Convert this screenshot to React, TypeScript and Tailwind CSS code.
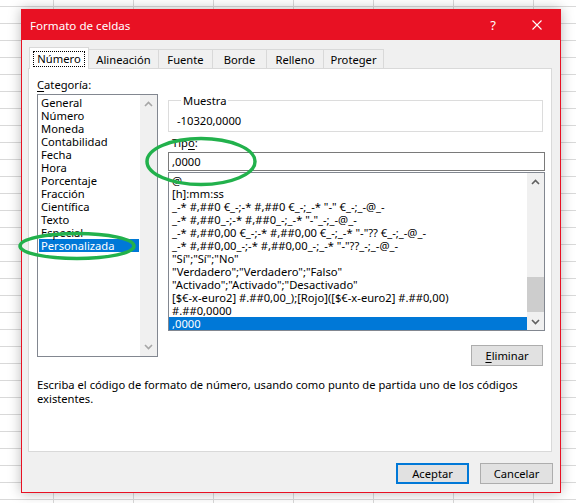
import React from 'react';

const categories = [
  'General',
  'Número',
  'Moneda',
  'Contabilidad',
  'Fecha',
  'Hora',
  'Porcentaje',
  'Fracción',
  'Científica',
  'Texto',
  'Especial',
  'Personalizada',
];

const formats = [
  '@',
  '[h]:mm:ss',
  '_-* #,##0 €_-;-* #,##0 €_-;_-* "-" €_-;_-@_-',
  '_-* #,##0_-;-* #,##0_-;_-* "-"_-;_-@_-',
  '_-* #,##0,00 €_-;-* #,##0,00 €_-;_-* "-"?? €_-;_-@_-',
  '_-* #,##0,00_-;-* #,##0,00_-;_-* "-"??_-;_-@_-',
  '"Sí";"Sí";"No"',
  '"Verdadero";"Verdadero";"Falso"',
  '"Activado";"Activado";"Desactivado"',
  '[$€-x-euro2] #.##0,00_);[Rojo]([$€-x-euro2] #.##0,00)',
  '#.##0,0000',
  ',0000',
];

const tabs = [
  { label: 'Alineación', w: 'w-[70px]' },
  { label: 'Fuente', w: 'w-[54px]' },
  { label: 'Borde', w: 'w-[54px]' },
  { label: 'Relleno', w: 'w-[57px]' },
  { label: 'Proteger', w: 'w-[60px]' },
];

function Chevron({ up, color }: { up?: boolean; color: string }) {
  return (
    <svg width="9" height="6" viewBox="0 0 9 6">
      <path
        d={up ? 'M1 5L4.5 1.5L8 5' : 'M1 1L4.5 4.5L8 1'}
        fill="none"
        stroke={color}
        strokeWidth="1.6"
      />
    </svg>
  );
}

export default function App() {
  return (
    <div className="relative h-[503px] w-[576px] overflow-hidden bg-white bg-[linear-gradient(to_right,#d9d9d9_1px,transparent_1px),linear-gradient(to_bottom,#d9d9d9_1px,transparent_1px)] bg-size-[80px_17px] bg-position-[53px_6px] pl-[21px] pt-[9px] font-['Noto_Sans',sans-serif] text-[11.2px] leading-[13px] text-black">
      <div className="flex h-[484px] w-[540px] flex-col border border-[#e81123] bg-[#f0f0f0] shadow-[0_0_12px_rgba(0,0,0,0.28)]">
        {/* title bar */}
        <div className="flex h-[30px] shrink-0 items-center bg-[#e81123] pl-[8px] text-[11.6px] text-white">
          <span>Formato de celdas</span>
          <span className="ml-auto mr-[36px] text-[13px]">?</span>
          <svg width="10" height="10" viewBox="0 0 10 10" className="mr-[18px]">
            <path d="M0.5 0.5L9.5 9.5M9.5 0.5L0.5 9.5" stroke="white" strokeWidth="1.1" />
          </svg>
        </div>

        {/* tabs */}
        <div className="ml-[7px] mt-[7px] flex h-[21px] shrink-0 items-end">
          <div className="relative z-10 -mb-px flex h-[22px] w-[60px] items-center justify-center border border-b-0 border-[#d9d9d9] bg-white">
            <span className="border border-dotted border-black px-[3px] pb-px">Número</span>
          </div>
          {tabs.map((t) => (
            <div
              key={t.label}
              className={`flex h-[19px] items-center justify-center border border-b-0 border-l-0 border-[#d9d9d9] bg-[#f0f0f0] ${t.w}`}
            >
              {t.label}
            </div>
          ))}
        </div>

        {/* panel */}
        <div className="ml-[6px] mr-[8px] flex h-[384px] shrink-0 flex-col border border-[#d9d9d9] bg-white pl-[8px] pt-[9px]">
          <div className="flex gap-[10px]">
            <div className="flex w-[121px] flex-col">
              <div className="h-[13px]">
                <span className="underline underline-offset-2">C</span>ategoría:
              </div>
              <div className="mt-[3px] flex h-[263px] border border-[#828790]">
                <div className="flex-1 overflow-hidden whitespace-nowrap pt-[1px]">
                  {categories.map((c) => (
                    <div
                      key={c}
                      className={
                        c === 'Personalizada'
                          ? 'mx-[1px] h-[13px] bg-[#0078d7] pl-[2px] text-white'
                          : 'h-[13px] pl-[3px]'
                      }
                    >
                      {c}
                    </div>
                  ))}
                </div>
                <div className="flex w-[17px] flex-col items-center justify-between bg-[#f0f0f0] py-[6px]">
                  <Chevron up color="#a6a6a6" />
                  <Chevron color="#a6a6a6" />
                </div>
              </div>
            </div>

            <div className="flex w-[377px] flex-col">
              <fieldset className="mt-[16px] mr-[2px] h-[38px] border border-[#dcdcdc] pl-[8px]">
                <legend className="ml-[4px] px-[2px]">Muestra</legend>
                <div className="mt-[7px]">-10320,0000</div>
              </fieldset>

              <div className="ml-[4px] mt-[4px] h-[13px]">
                Tip<span className="underline underline-offset-2">o</span>:
              </div>
              <div className="mt-[3px] flex h-[19px] items-center border border-[#7a7a7a] pl-[3px]">,0000</div>

              <div className="mt-[1px] flex h-[159px] border border-[#828790]">
                <div className="flex-1 overflow-hidden whitespace-nowrap pt-[1px]">
                  {formats.map((f) => (
                    <div
                      key={f}
                      className={f === ',0000' ? 'h-[13px] bg-[#0078d7] pl-[3px] text-white' : 'h-[13px] pl-[3px]'}
                    >
                      {f}
                    </div>
                  ))}
                </div>
                <div className="flex w-[17px] flex-col bg-[#f0f0f0]">
                  <div className="flex h-[17px] items-center justify-center">
                    <Chevron up color="#606060" />
                  </div>
                  <div className="h-[87px]" />
                  <div className="h-[35px] bg-[#cdcdcd]" />
                  <div className="flex-1" />
                  <div className="flex h-[17px] items-center justify-center">
                    <Chevron color="#606060" />
                  </div>
                </div>
              </div>

              <button className="mr-[2px] mt-[14px] h-[21px] w-[72px] self-end border border-[#adadad] bg-[#e1e1e1]">
                <span className="underline underline-offset-2">E</span>liminar
              </button>
            </div>
          </div>

          <p className="mt-[12px] leading-[14px]">
            Escriba el código de formato de número, usando como punto de partida uno de los códigos
            <br />
            existentes.
          </p>
        </div>

        {/* footer buttons */}
        <div className="mr-[7px] mt-[11px] flex justify-end gap-[11px]">
          <button className="h-[21px] w-[73px] border-2 border-[#0078d7] bg-[#e1e1e1]">Aceptar</button>
          <button className="h-[21px] w-[73px] border border-[#adadad] bg-[#e1e1e1]">Cancelar</button>
        </div>
      </div>

      {/* green highlight marks */}
      <svg className="pointer-events-none absolute left-0 top-0" width="576" height="503">
        <ellipse cx="77" cy="246" rx="57" ry="12.5" fill="none" stroke="#22b14c" strokeWidth="3.5" />
        <ellipse cx="201" cy="161.5" rx="54" ry="23" fill="none" stroke="#22b14c" strokeWidth="3.5" />
      </svg>
    </div>
  );
}
